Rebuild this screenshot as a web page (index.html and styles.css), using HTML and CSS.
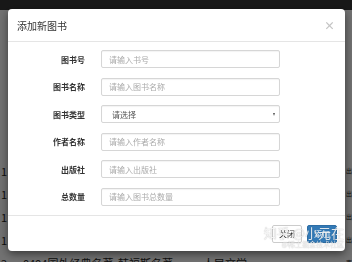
FILE: index.html
```html
<!DOCTYPE html>
<html>
<head>
<meta charset="utf-8">
<link rel="stylesheet" href="styles.css">
</head>
<body>

<div class="page">
 <div class="navbar"></div>
 <div class="books">
    <div class="book-row"><span class="num">1</span><span class="press">出</span></div>
    <div class="book-row"><span class="num">1</span><span class="press">出</span></div>
    <div class="book-row"><span class="num">1</span><span class="press">出</span></div>
    <div class="book-row"><span class="num">1</span><span class="press">出</span></div>
    <div class="book-row last"><span class="num">2</span><span class="title">0494国外经典名著</span><span class="mid">韩福斯名著</span><span class="mid">人民文学</span><span class="press">南</span></div>
 </div>
</div>

<div class="backdrop">
 <div class="modal">
    <div class="modal-header">
        <h4>添加新图书</h4>
        <span class="close">&times;</span>
    </div>
    <form class="modal-body">
        <div class="form-row">
            <label for="bno">图书号</label>
            <input type="text" id="bno" placeholder="请输入书号">
        </div>
        <div class="form-row">
            <label for="bname">图书名称</label>
            <input type="text" id="bname" placeholder="请输入图书名称">
        </div>
        <div class="form-row">
            <label for="btype">图书类型</label>
            <div class="select">
                <span>请选择</span>
                <span class="caret"></span>
            </div>
        </div>
        <div class="form-row">
            <label for="author">作者名称</label>
            <input type="text" id="author" placeholder="请输入作者名称">
        </div>
        <div class="form-row">
            <label for="press">出版社</label>
            <input type="text" id="press" placeholder="请输入出版社">
        </div>
        <div class="form-row">
            <label for="total">总数量</label>
            <input type="text" id="total" placeholder="请输入图书总数量">
        </div>
    </form>
    <div class="modal-footer">
        <button class="btn">关闭</button>
        <button class="btn btn-primary">添加</button>
    </div>
 </div>
 <div class="watermark">
    <span class="wm-main">知乎 @小元在</span>
    <span class="wm-sub">@稀土掘金技术社区</span>
 </div>
</div>

</body>
</html>
```

FILE: styles.css
```css
body {
    margin: 0;
    font-family: "Noto Sans CJK SC", "Liberation Sans", sans-serif;
    background: #ececec;
    overflow: hidden;
}

.page {
    height: 262px;
}

.navbar {
    height: 10px;
    background: #333;
}

.books {
    padding-top: 149px;
}

.book-row {
    display: flex;
    height: 23px;
    align-items: center;
    font-size: 11px;
    color: #222;
    white-space: nowrap;
}

.book-row .num {
    width: 22px;
    padding-left: 1px;
}

.book-row .title {
    width: 95px;
}

.book-row .mid {
    width: 85px;
}

.book-row .press {
    margin-left: auto;
    width: 6px;
    font-size: 6px;
    overflow: hidden;
}

.backdrop {
    position: fixed;
    top: 0;
    left: 0;
    right: 0;
    bottom: 0;
    background: rgba(0,0,0,0.52);
}

.modal {
    position: absolute;
    top: 9px;
    left: 8px;
    width: 337px;
    background: #fff;
    border-radius: 4px;
    box-shadow: 0 3px 9px rgba(0,0,0,0.5);
}

.modal-header {
    display: flex;
    align-items: center;
    justify-content: space-between;
    height: 32px;
    padding: 0 10px 0 9px;
    border-bottom: 1px solid #e5e5e5;
}

.modal-header h4 {
    margin: 0;
    font-size: 10px;
    font-weight: normal;
    color: #333;
}

.close {
    font-size: 11px;
    font-weight: bold;
    color: #c4c4c4;
    line-height: 1;
}

.modal-body {
    display: flex;
    flex-direction: column;
    gap: 9.6px;
    padding: 8px 0 9px;
    margin: 0;
    border-bottom: 1px solid #e5e5e5;
}

.form-row {
    display: flex;
    align-items: center;
}

.form-row label {
    width: 77px;
    text-align: right;
    font-size: 8px;
    font-weight: bold;
    color: #333;
    margin-right: 16px;
}

.form-row input,
.select {
    width: 179px;
    height: 18px;
    padding: 0 7px;
    border: 1px solid #d6d6d6;
    border-radius: 2px;
    box-sizing: border-box;
    font-family: inherit;
    font-size: 8px;
    color: #555;
    box-shadow: inset 0 1px 1px rgba(0,0,0,0.05);
}

.form-row input::placeholder {
    color: #aaa;
}

.select {
    display: flex;
    align-items: center;
    justify-content: space-between;
    padding: 0 4px 0 10px;
    color: #555;
}

.caret {
    width: 0;
    height: 0;
    border-left: 1.5px solid transparent;
    border-right: 1.5px solid transparent;
    border-top: 3px solid #555;
}

.modal-footer {
    display: flex;
    justify-content: flex-end;
    gap: 5px;
    padding: 9px 8px 8px;
}

.btn {
    width: 30px;
    height: 18px;
    padding: 0;
    border: 1px solid #ccc;
    border-radius: 2px;
    background: #fff;
    font-family: inherit;
    font-size: 8px;
    color: #333;
}

.btn-primary {
    background: #337ab7;
    border-color: #2e6da4;
    color: #fff;
}

.watermark {
    position: absolute;
    left: 257px;
    top: 226px;
    display: flex;
    flex-direction: column;
    align-items: flex-end;
    width: 87px;
    color: rgba(255,255,255,0.85);
    text-shadow: 0 0 1px rgba(0,0,0,0.35);
    line-height: 1;
}

.wm-main {
    font-size: 13px;
    white-space: nowrap;
}

.wm-sub {
    font-size: 7px;
    margin-top: 2px;
    white-space: nowrap;
}
```
